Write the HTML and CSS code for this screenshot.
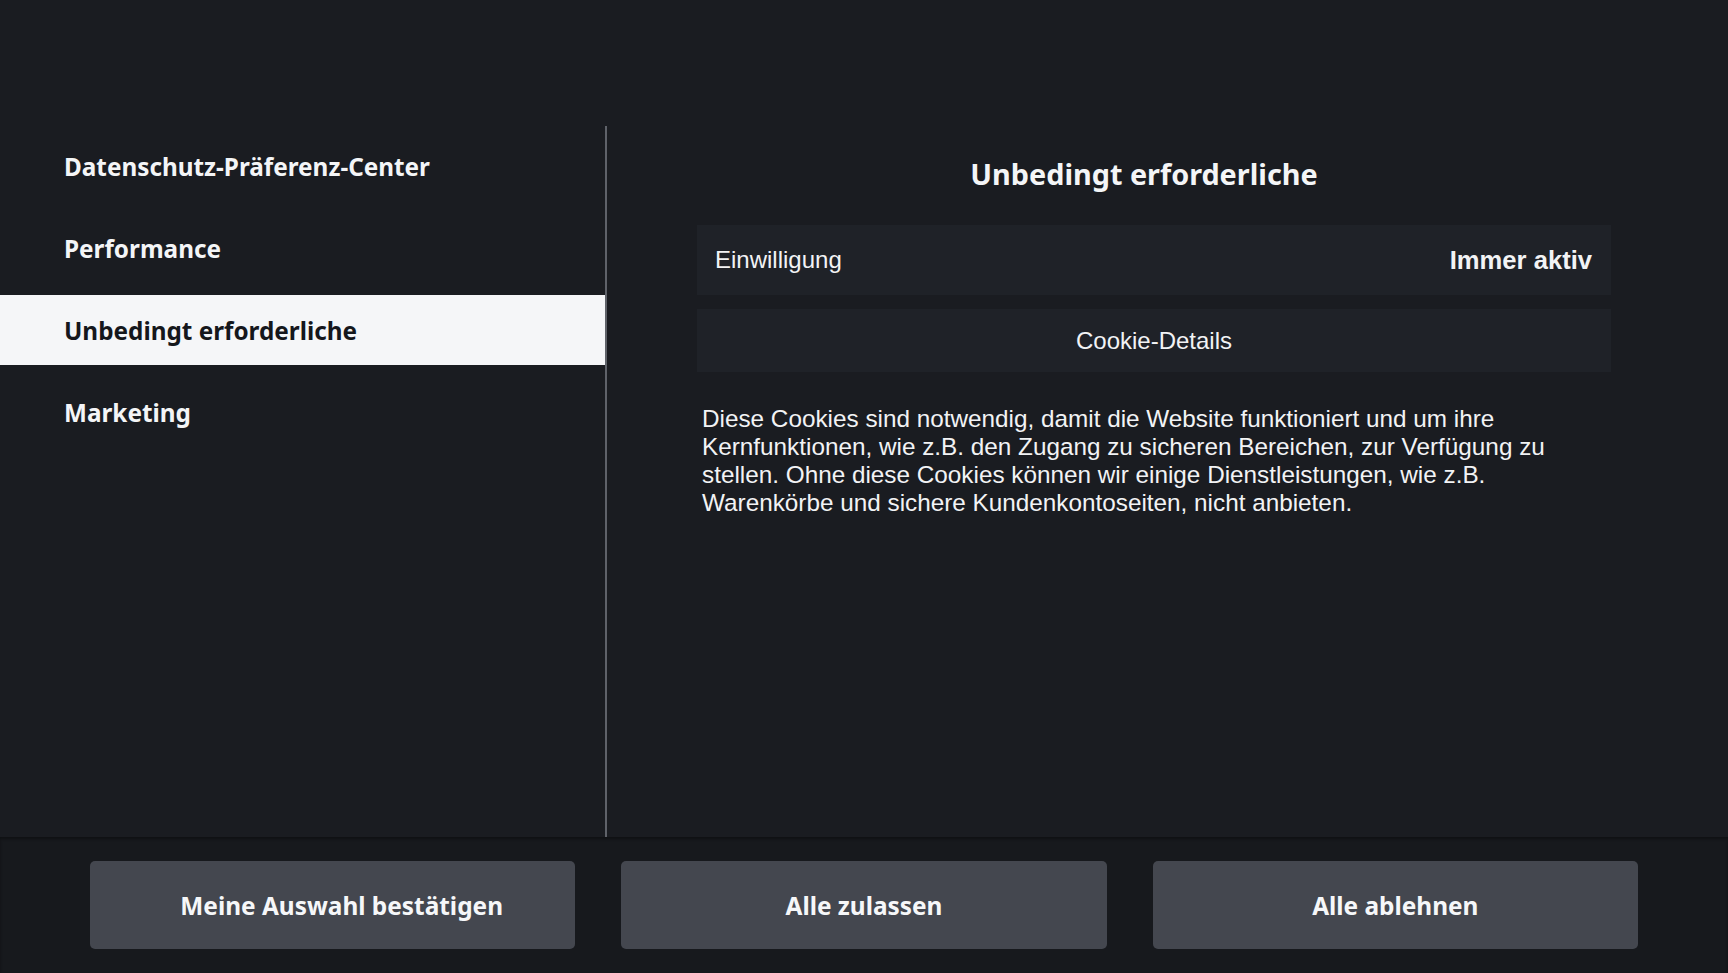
FILE: index.html
```html
<!DOCTYPE html>
<html lang="de">
<head>
<meta charset="utf-8">
<title>Datenschutz-Präferenz-Center</title>
<link rel="stylesheet" href="styles.css">
</head>
<body>
<div class="page">
  <div class="main">
    <nav class="sidebar">
      <div class="nav-item">Datenschutz-Präferenz-Center</div>
      <div class="nav-item">Performance</div>
      <div class="nav-item active">Unbedingt erforderliche</div>
      <div class="nav-item">Marketing</div>
    </nav>
    <section class="content">
      <h1 class="title">Unbedingt erforderliche</h1>
      <div class="column">
        <div class="box consent">
          <span class="consent-label">Einwilligung</span>
          <span class="consent-state">Immer aktiv</span>
        </div>
        <div class="box details">Cookie-Details</div>
        <p class="desc">Diese Cookies sind notwendig, damit die Website funktioniert und um ihre Kernfunktionen, wie z.B. den Zugang zu sicheren Bereichen, zur Verfügung zu stellen. Ohne diese Cookies können wir einige Dienstleistungen, wie z.B. Warenkörbe und sichere Kundenkontoseiten, nicht anbieten.</p>
      </div>
    </section>
  </div>
  <footer class="actions">
    <button class="btn btn-confirm">Meine Auswahl bestätigen</button>
    <button class="btn">Alle zulassen</button>
    <button class="btn">Alle ablehnen</button>
  </footer>
</div>
</body>
</html>
```

FILE: styles.css
```css
* { box-sizing: border-box; }
html, body {
  margin: 0;
  padding: 0;
  background: #1a1c21;
  color: #f4f5f7;
}
body {
  width: 1728px;
  height: 973px;
  overflow: hidden;
}
.page {
  display: flex;
  flex-direction: column;
  height: 973px;
}
.main {
  display: flex;
  flex-direction: row;
  padding-top: 126px;
  height: 837px;
}
.sidebar {
  width: 607px;
  border-right: 2px solid #5f6269;
  padding-top: 5px;
  display: flex;
  flex-direction: column;
  gap: 12px;
}
.nav-item {
  height: 70px;
  display: flex;
  align-items: center;
  padding-left: 64px;
  font-family: "Noto Sans", "Open Sans", sans-serif;
  font-weight: 700;
  font-size: 24.3px;
  color: #f4f5f7;
}
.nav-item.active {
  background: #f5f6f8;
  color: #15171c;
}
.content {
  flex: 1;
  padding: 0 117px 0 90px;
}
.title {
  margin: 28px 20px 31px 0;
  height: 40px;
  line-height: 40px;
  text-align: center;
  font-family: "Noto Sans", "Open Sans", sans-serif;
  font-weight: 700;
  font-size: 28.8px;
  color: #f4f5f7;
}
.column {
  display: flex;
  flex-direction: column;
}
.box {
  background: #1f2228;
  font-family: "Liberation Sans", Arial, sans-serif;
  font-size: 24px;
  color: #f2f3f5;
}
.consent {
  height: 70px;
  display: flex;
  align-items: center;
  justify-content: space-between;
  padding: 0 19px 0 18px;
}
.consent-state {
  font-weight: 700;
  font-size: 25.6px;
}
.details {
  margin-top: 14px;
  height: 63px;
  display: flex;
  align-items: center;
  justify-content: center;
}
.desc {
  margin: 33px 0 0 0;
  padding: 0 0 0 5px;
  font-family: "Liberation Sans", Arial, sans-serif;
  font-size: 24.3px;
  line-height: 28px;
  color: #f2f3f5;
}
.actions {
  height: 136px;
  background: #17191d;
  box-shadow: inset 0 2px 3px rgba(0,0,0,0.35);
  display: flex;
  gap: 46px;
  padding: 24px 90px;
}
.btn {
  flex: 1 1 0;
  min-width: 0;
  height: 88px;
  border: none;
  border-radius: 5px;
  background: #44474f;
  color: #f6f7f9;
  font-family: "Noto Sans", "Open Sans", sans-serif;
  font-weight: 700;
  font-size: 24.4px;
  padding: 0;
}
.btn-confirm {
  text-indent: 18px;
}
```
